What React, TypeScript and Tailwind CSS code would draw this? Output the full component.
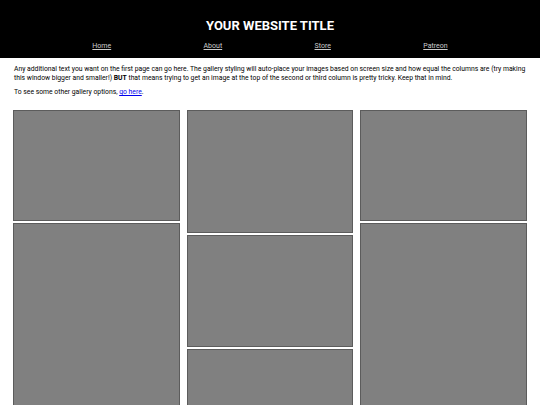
const columns: number[][] = [
  [111, 220],
  [123, 112, 80],
  [111, 220],
];

function Tile({ h }: { h: number }) {
  return (
    <div
      className="w-full bg-[#808080] border border-[#5c5c5c]"
      style={{ height: h }}
    />
  );
}

export default function App() {
  return (
    <div className="min-h-screen bg-white font-['Roboto',sans-serif] text-black overflow-hidden">
      {/* Header */}
      <header className="bg-black h-[58px] flex flex-col items-center pt-[18px]">
        <h1 className="text-white font-bold text-[13px] leading-[16px]">YOUR WEBSITE TITLE</h1>
        <nav className="w-full flex justify-evenly mt-[8px]">
          <a href="#" className="text-[#cccccc] underline text-[7px] leading-[9px]">Home</a>
          <a href="#" className="text-[#cccccc] underline text-[7px] leading-[9px]">About</a>
          <a href="#" className="text-[#cccccc] underline text-[7px] leading-[9px]">Store</a>
          <a href="#" className="text-[#cccccc] underline text-[7px] leading-[9px]">Patreon</a>
        </nav>
      </header>

      {/* Intro */}
      <div className="px-[14px] pt-[7px] text-[6.8px] leading-[9px]">
        <p>
          Any additional text you want on the first page can go here. The gallery styling will auto-place your images based on screen size and how equal the columns are (try making this window bigger and smaller!) <b>BUT</b> that means trying to get an image at the top of the second or third column is pretty tricky. Keep that in mind.
        </p>
        <p className="mt-[5px]">
          To see some other gallery options, <a href="#" className="text-[#0000ee] underline">go here</a>.
        </p>
      </div>

      {/* Gallery */}
      <div className="grid grid-cols-3 gap-[7px] px-[13px] mt-[13px]">
        {columns.map((col, i) => (
          <div key={i} className="flex flex-col gap-[2px]">
            {col.map((h, j) => (
              <Tile key={j} h={h} />
            ))}
          </div>
        ))}
      </div>
    </div>
  );
}
